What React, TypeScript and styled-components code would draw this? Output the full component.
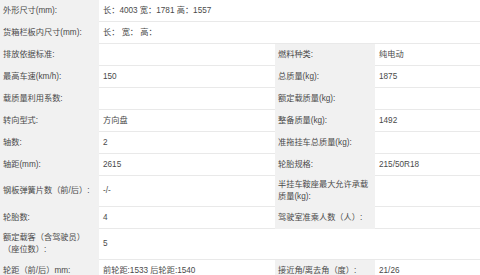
import React from 'react';
import styled, { createGlobalStyle } from 'styled-components';

const GlobalStyle = createGlobalStyle`
  html, body {
    margin: 0;
    padding: 0;
    background: #ffffff;
  }
`;

const StyledSheet = styled.div`
  display: grid;
  grid-template-columns: 99px 176px 100px 1fr;
  width: 480px;
  font-family: "Liberation Sans", "Noto Sans CJK SC", sans-serif;
  font-size: 8.2px;
  line-height: 12px;
  color: #4a4a4a;
`;

const StyledCell = styled.div<{ $label?: boolean; $span?: number }>`
  display: flex;
  align-items: center;
  min-height: 22px;
  box-sizing: border-box;
  padding: 3px ${(props) => (props.$label ? '3px' : '4px')};
  background: ${(props) => (props.$label ? '#f1f1f1' : '#ffffff')};
  border-bottom: 1px solid ${(props) => (props.$label ? '#f1f1f1' : '#e9e9e9')};
  grid-column: span ${(props) => props.$span || 1};
  word-break: break-all;
`;

type Row = [string, string, string?, string?];

const rows: Row[] = [
  ['外形尺寸(mm):', '长：4003 宽：1781 高：1557'],
  ['货箱栏板内尺寸(mm):', '长：  宽：  高：'],
  ['排放依据标准:', '', '燃料种类:', '纯电动'],
  ['最高车速(km/h):', '150', '总质量(kg):', '1875'],
  ['载质量利用系数:', '', '额定载质量(kg):', ''],
  ['转向型式:', '方向盘', '整备质量(kg):', '1492'],
  ['轴数:', '2', '准拖挂车总质量(kg):', ''],
  ['轴距(mm):', '2615', '轮胎规格:', '215/50R18'],
  ['钢板弹簧片数（前/后）:', '-/-', '半挂车鞍座最大允许承载质量(kg):', ''],
  ['轮胎数:', '4', '驾驶室准乘人数（人）:', ''],
  ['额定载客（含驾驶员）（座位数）:', '5'],
  ['轮距（前/后）mm:', '前轮距:1533 后轮距:1540', '接近角/离去角（度）:', '21/26'],
];

// rows 0-1 span the whole width, row 10 has an empty right half
function App() {
  return (
    <>
      <GlobalStyle />
      <StyledSheet>
        {rows.map((row, i) => {
          const [label, value, label2, value2] = row;
          if (label2 === undefined) {
            return (
              <React.Fragment key={i}>
                <StyledCell $label>{label}</StyledCell>
                <StyledCell $span={i < 2 ? 3 : 1}>{value}</StyledCell>
                {i >= 2 && <StyledCell $span={2} />}
              </React.Fragment>
            );
          }
          return (
            <React.Fragment key={i}>
              <StyledCell $label>{label}</StyledCell>
              <StyledCell>{value}</StyledCell>
              <StyledCell $label>{label2}</StyledCell>
              <StyledCell>{value2}</StyledCell>
            </React.Fragment>
          );
        })}
      </StyledSheet>
    </>
  );
}

export default App;
